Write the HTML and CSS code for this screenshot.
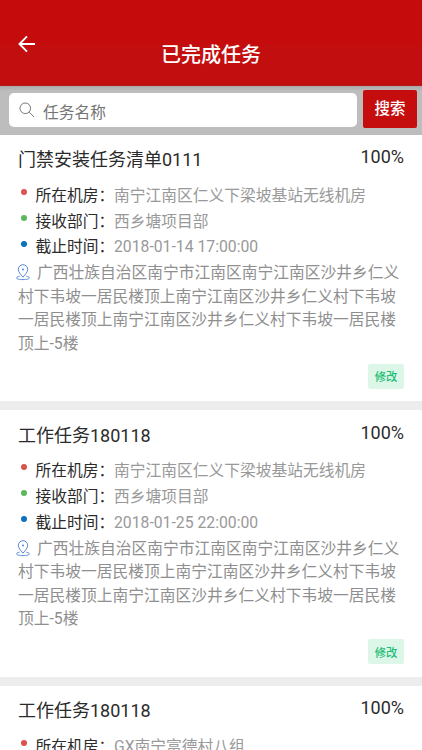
FILE: index.html
```html
<!DOCTYPE html>
<html lang="zh-CN">
<head>
<meta charset="utf-8">
<title>已完成任务</title>
<link rel="stylesheet" href="styles.css">
</head>
<body>
<svg width="0" height="0" class="defs">
  <symbol id="pin" viewBox="0 0 14 17">
    <path d="M7 13.2C4.6 10.3 2.3 8 2.3 5.4a4.7 4.7 0 0 1 9.4 0C11.7 8 9.4 10.3 7 13.2Z"/>
    <circle cx="7" cy="5.5" r="1" class="pin-dot"/>
    <path d="M3.6 12.2C1.6 12.6.6 13.2.6 13.9c0 1 2.8 1.7 6.4 1.7s6.4-.7 6.4-1.7c0-.7-1-1.3-3-1.7"/>
  </symbol>
</svg>
<header class="topbar">
  <svg class="back" viewBox="0 0 18 18"><path d="M17 9H1.8M9 1.4L1.5 9L9 16.6"/></svg>
  <h1>已完成任务</h1>
</header>
<div class="searchbar">
  <div class="field">
    <svg class="glass" viewBox="0 0 16 16"><circle cx="6.3" cy="6.3" r="5.3"/><path d="M10.2 10.2L15 14.8"/></svg>
    <span>任务名称</span>
  </div>
  <button class="search-btn">搜索</button>
</div>
<main>
  <article class="card">
    <div class="head"><h2>门禁安装任务清单0111</h2><span class="percent">100%</span></div>
    <ul class="meta">
      <li class="red"><b>所在机房：</b><span>南宁江南区仁义下梁坡基站无线机房</span></li>
      <li class="green"><b>接收部门：</b><span>西乡塘项目部</span></li>
      <li class="blue"><b>截止时间：</b><span>2018-01-14 17:00:00</span></li>
    </ul>
    <p class="address"><svg class="pin"><use href="#pin"/></svg>广西壮族自治区南宁市江南区南宁江南区沙井乡仁义<br>村下韦坡一居民楼顶上南宁江南区沙井乡仁义村下韦坡<br>一居民楼顶上南宁江南区沙井乡仁义村下韦坡一居民楼<br>顶上-5楼</p>
    <button class="edit">修改</button>
  </article>
  <article class="card">
    <div class="head"><h2>工作任务180118</h2><span class="percent">100%</span></div>
    <ul class="meta">
      <li class="red"><b>所在机房：</b><span>南宁江南区仁义下梁坡基站无线机房</span></li>
      <li class="green"><b>接收部门：</b><span>西乡塘项目部</span></li>
      <li class="blue"><b>截止时间：</b><span>2018-01-25 22:00:00</span></li>
    </ul>
    <p class="address"><svg class="pin"><use href="#pin"/></svg>广西壮族自治区南宁市江南区南宁江南区沙井乡仁义<br>村下韦坡一居民楼顶上南宁江南区沙井乡仁义村下韦坡<br>一居民楼顶上南宁江南区沙井乡仁义村下韦坡一居民楼<br>顶上-5楼</p>
    <button class="edit">修改</button>
  </article>
  <article class="card last">
    <div class="head"><h2>工作任务180118</h2><span class="percent">100%</span></div>
    <ul class="meta">
      <li class="red"><b>所在机房：</b><span>GX南宁富德村八组</span></li>
    </ul>
  </article>
</main>
</body>
</html>
```
FILE: styles.css
```css
* { box-sizing: border-box; margin: 0; padding: 0; }
html, body { height: 750px; overflow: hidden; }
body {
  display: flex;
  flex-direction: column;
  background: #ededed;
  color: #2b2b2b;
  font-family: Roboto, "Noto Sans CJK SC", sans-serif;
  font-size: 15.75px;
}
button { border: 0; font-family: inherit; }
.defs { display: none; }

.topbar {
  flex: none;
  display: grid;
  grid-template-columns: 18px 1fr 18px;
  height: 86px;
  padding: 0 18px;
  background: linear-gradient(#c50b0b 0 44px, #c30e0f 44px);
  border-bottom: 1px solid #b01a1b;
}
.back {
  width: 18px;
  height: 18px;
  margin-top: 35px;
  fill: none;
  stroke: #fff;
  stroke-width: 1.9;
}
.topbar h1 {
  margin-top: 40px;
  color: #fff;
  font-size: 20px;
  font-weight: 500;
  line-height: 30px;
  text-align: center;
}

.searchbar {
  flex: none;
  display: flex;
  align-items: flex-start;
  gap: 6px;
  height: 48.5px;
  padding: 4px 5px 0 9px;
  background: linear-gradient(#aaa, #bdbdbd 5px);
}
.field {
  flex: 1;
  display: flex;
  align-items: center;
  gap: 8px;
  height: 34px;
  margin-top: 3px;
  padding: 2px 0 0 10px;
  border-radius: 5px;
  background: #fff;
  color: #757575;
}
.glass {
  width: 16px;
  height: 16px;
  margin-top: -3px;
  fill: none;
  stroke: #777;
  stroke-width: 1;
}
.search-btn {
  width: 54px;
  height: 38px;
  padding-bottom: 4px;
  border-radius: 2px;
  background: #c50d0e;
  color: #fff;
  font-size: 15.5px;
  font-weight: 500;
}

main { flex: 1; min-height: 0; overflow: hidden; }
.card {
  height: 266.5px;
  margin-bottom: 9px;
  padding: 11.5px 18px 0;
  background: #fff;
}
.card.last { height: 64.5px; margin: 0; }
.head { display: flex; justify-content: space-between; height: 28px; }
.head h2 {
  font-size: 18px;
  font-weight: 400;
  line-height: 28px;
}
.percent { font-size: 18px; line-height: 22px; }
.meta { padding-top: 8.8px; list-style: none; line-height: 25.8px; white-space: nowrap; }
.meta li { display: flex; align-items: center; height: 25.8px; }
.meta li::before {
  content: "";
  width: 6px;
  height: 6px;
  margin: -7.5px 8.5px 0 3px;
  border-radius: 50%;
  background: currentColor;
}
.meta .red { color: #d9534f; }
.meta .green { color: #5cb85c; }
.meta .blue { color: #0b70bd; }
.meta b { width: 78.5px; color: #2b2b2b; font-weight: 400; }
.meta span { color: #999; }
.address {
  padding-top: 1px;
  color: #8f8f8f;
  line-height: 23.6px;
  white-space: nowrap;
}
.pin {
  width: 14px;
  height: 17px;
  margin: 0 7px 0 -2px;
  vertical-align: -3px;
  fill: none;
  stroke: #5587d6;
  stroke-width: 1;
}
.pin-dot { fill: #5587d6; stroke: none; }
.edit {
  display: block;
  width: 36px;
  height: 25px;
  margin: 8.2px 0 0 auto;
  border-radius: 2px;
  background: #dcf7e8;
  color: #1fbd77;
  font-size: 11.3px;
  font-weight: 500;
}
```
